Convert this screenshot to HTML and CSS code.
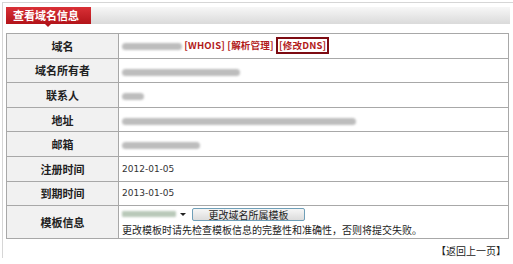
FILE: index.html
```html
<!DOCTYPE html>
<html lang="zh-CN">

<head>
  <meta charset="UTF-8">
  <title>查看域名信息</title>
  <link rel="stylesheet" href="styles.css">
</head>

<body>
  <div class="page">
    <div class="title-bar">
      <div class="tab">查看域名信息</div>
    </div>

    <table class="info">
      <tr>
        <th>域名</th>
        <td>
          <span class="blur w60"></span>
          <a class="link" href="#">[WHOIS]</a>
          <a class="link" href="#">[解析管理]</a>
          <a class="link boxed" href="#">[修改DNS]</a>
        </td>
      </tr>
      <tr>
        <th>域名所有者</th>
        <td><span class="blur w118"></span></td>
      </tr>
      <tr>
        <th>联系人</th>
        <td><span class="blur w22"></span></td>
      </tr>
      <tr>
        <th>地址</th>
        <td><span class="blur w234"></span></td>
      </tr>
      <tr>
        <th>邮箱</th>
        <td><span class="blur w78"></span></td>
      </tr>
      <tr>
        <th>注册时间</th>
        <td class="num">2012-01-05</td>
      </tr>
      <tr>
        <th>到期时间</th>
        <td class="num">2013-01-05</td>
      </tr>
      <tr class="tall">
        <th>模板信息</th>
        <td>
          <div class="tpl-line">
            <span class="select"><span class="blur w54"></span><span class="arrow"></span></span>
            <button class="btn">更改域名所属模板</button>
          </div>
          <div class="tip">更改模板时请先检查模板信息的完整性和准确性，否则将提交失败。</div>
        </td>
      </tr>
    </table>

    <div class="back"><a href="#">【返回上一页】</a></div>
  </div>
</body>

</html>
```

FILE: styles.css
```css
* {
  box-sizing: border-box;
}

html,
body {
  margin: 0;
  background: #fff;
}

body {
  font-family: "Noto Sans CJK SC", "DejaVu Sans", sans-serif;
  font-size: 10px;
  color: #222;
}

.page {
  margin: 2px 0 0 2px;
  padding: 4px 3px 0 3px;
  border-top: 1px solid #d6d6d6;
  border-left: 1px solid #d6d6d6;
}

.title-bar {
  height: 17px;
  display: flex;
  background: linear-gradient(#f7f7f7, #dadada);
}

.tab {
  position: relative;
  width: 85px;
  padding-left: 7px;
  line-height: 17px;
  font-size: 11px;
  font-weight: bold;
  color: #fff;
  background: linear-gradient(#d93036, #b3141a);
}

.tab::after {
  content: "";
  position: absolute;
  left: 39px;
  bottom: -3px;
  border-left: 3px solid transparent;
  border-right: 3px solid transparent;
  border-top: 3px solid #b3141a;
}

.info {
  width: 503px;
  margin-top: 9px;
  border-collapse: collapse;
  table-layout: fixed;
}

.info th,
.info td {
  height: 24.6px;
  border: 1px solid #a8a8a8;
  padding: 0 0 0 3px;
}

.info th {
  width: 112px;
  padding: 0;
  background: #f1f1f1;
  font-size: 11px;
  font-weight: bold;
  text-align: center;
  color: #222;
}

.info tr.tall th,
.info tr.tall td {
  height: 33px;
}

.info td.num {
  font-family: "DejaVu Sans", sans-serif;
  font-size: 9px;
  color: #333;
}

.blur {
  display: inline-block;
  height: 7px;
  vertical-align: middle;
  border-radius: 4px;
  background: #bdbdbd;
  filter: blur(1px);
}

.w22 { width: 22px; }
.w54 { width: 54px; }
.w60 { width: 60px; }
.w78 { width: 78px; }
.w118 { width: 118px; }
.w234 { width: 234px; }

.link {
  font-weight: bold;
  font-size: 9.5px;
  color: #b21a1a;
  text-decoration: none;
  letter-spacing: 0.2px;
}

.boxed {
  display: inline-block;
  padding: 1px 1px;
  border: 2px solid #7d0b12;
  line-height: 11px;
}

.tpl-line {
  display: flex;
  align-items: center;
  gap: 6px;
  height: 14px;
}

.select {
  display: flex;
  align-items: center;
  gap: 4px;
}

.select .blur {
  height: 6px;
  border-radius: 1px;
  background: #b9c9b9;
}

.arrow {
  border-left: 3px solid transparent;
  border-right: 3px solid transparent;
  border-top: 3px solid #222;
}

.btn {
  width: 113px;
  height: 13px;
  padding: 0;
  font-family: inherit;
  font-size: 10px;
  line-height: 11px;
  color: #222;
  border: 1px solid #6f9fb8;
  border-radius: 2px;
  background: linear-gradient(#f6f6f6, #dcdcdc);
}

.tip {
  margin-top: 1px;
  font-size: 10px;
  color: #222;
}

.back {
  padding: 4px 4px 0 0;
  text-align: right;
}

.back a {
  font-size: 10px;
  color: #222;
  text-decoration: none;
}
```
